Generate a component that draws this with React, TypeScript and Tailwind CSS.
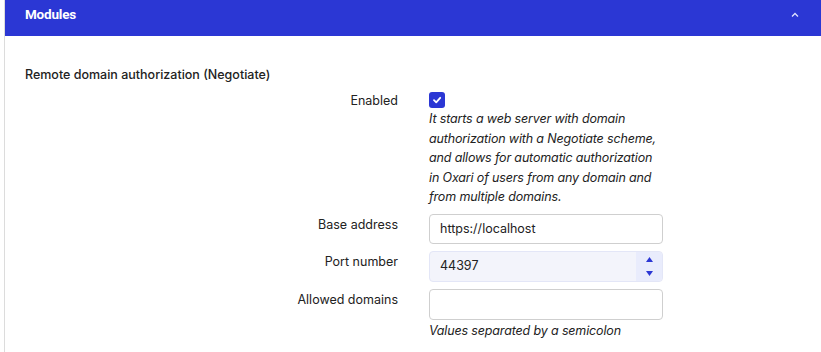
import React from 'react';

const BLUE = 'bg-[#2b37d4]';

const Row: React.FC<{ label: string; children: React.ReactNode }> = ({ label, children }) => (
  <div className="grid grid-cols-[373px_234px] gap-x-[31px]">
    <div className="text-right text-[12.5px] leading-5 text-[#222] pt-[1px]">{label}</div>
    <div>{children}</div>
  </div>
);

export default function App() {
  return (
    <div className="w-[821px] h-[352px] bg-white pl-[4px] overflow-hidden" style={{ fontFamily: 'Inter, "Noto Sans", sans-serif' }}>
      <div className="h-full border-l border-[#dcdcdc]">
        <div className={`${BLUE} h-[36px] flex items-start justify-between pl-[20px] pr-[20px] pt-[4px]`}>
          <span className="text-white text-[13.5px] font-bold leading-5 tracking-[-0.2px]" style={{ fontFamily: 'Roboto, sans-serif' }}>Modules</span>
          <svg width="10" height="10" viewBox="0 0 10 10" className="mt-[6px] mr-[1px]">
            <path d="M2 6.5 L5 3.5 L8 6.5" fill="none" stroke="#dfe2ff" strokeWidth="1.3" />
          </svg>
        </div>

        <div className="pl-[20px] pt-[29px]">
          <div className="text-[12.5px] leading-5 font-medium text-[#222]">Remote domain authorization (Negotiate)</div>

          <div className="mt-[5px] flex flex-col gap-[7px]">
            <Row label="Enabled">
              <div className="pt-[2px]">
                <div className={`w-4 h-4 rounded-[3px] ${BLUE} flex items-center justify-center`}>
                  <svg width="10" height="10" viewBox="0 0 10 10">
                    <path d="M2 5.2 L4.2 7.3 L8.2 2.8" fill="none" stroke="white" strokeWidth="1.8" strokeLinecap="round" strokeLinejoin="round" />
                  </svg>
                </div>
                <p className="mt-[1px] italic text-[12.5px] leading-[19.6px] tracking-[-0.15px] text-[#222]">
                  It starts a web server with domain authorization with a Negotiate scheme, and allows for automatic authorization in Oxari of users from any domain and from multiple domains.
                </p>
              </div>
            </Row>

            <Row label="Base address">
              <div className="h-[30px] rounded-[4px] border border-[#cfcfcf] px-[10px] flex items-center text-[12.5px] text-[#222]">
                https://localhost
              </div>
            </Row>

            <Row label="Port number">
              <div className="h-[31px] rounded-[4px] border border-[#e3e6f7] bg-[#f3f4fb] pl-[10px] flex items-center text-[12.5px] text-[#222]">
                <span className="flex-1">44397</span>
                <div className="h-full w-[26px] bg-[#e9ecfc] rounded-r-[4px] flex flex-col items-center justify-center gap-[9px]">
                  <svg width="7" height="5" viewBox="0 0 7 5"><path d="M0 5 L3.5 0 L7 5 Z" fill="#2b37d4" /></svg>
                  <svg width="7" height="5" viewBox="0 0 7 5"><path d="M0 0 L7 0 L3.5 5 Z" fill="#2b37d4" /></svg>
                </div>
              </div>
            </Row>

            <Row label="Allowed domains">
              <div>
                <div className="h-[31px] rounded-[4px] border border-[#cfcfcf]" />
                <p className="mt-[1px] italic text-[12.5px] leading-5 tracking-[-0.15px] text-[#222]">Values separated by a semicolon</p>
              </div>
            </Row>
          </div>
        </div>
      </div>
    </div>
  );
}
